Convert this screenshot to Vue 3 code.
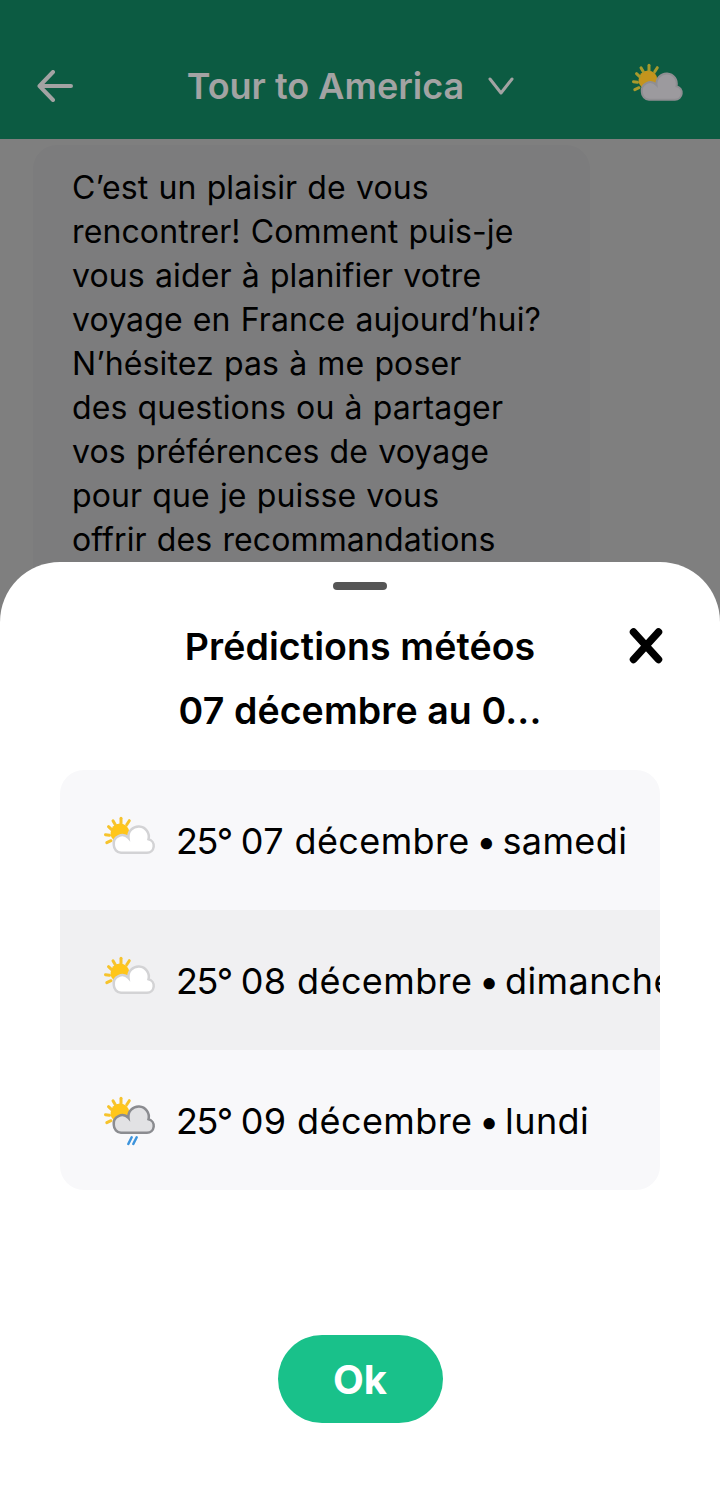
<script setup>
const rows = [
  { id: 1, temp: '25°', date: '07 décembre', day: 'samedi', rain: false },
  { id: 2, temp: '25°', date: '08 décembre', day: 'dimanche', rain: false },
  { id: 3, temp: '25°', date: '09 décembre', day: 'lundi', rain: true }
]
const lines = [
  'C’est un plaisir de vous',
  'rencontrer! Comment puis-je',
  'vous aider à planifier votre',
  'voyage en France aujourd’hui?',
  'N’hésitez pas à me poser',
  'des questions ou à partager',
  'vos préférences de voyage',
  'pour que je puisse vous',
  'offrir des recommandations',
  'personnalisées.'
]
const rays = [
  'M1.500 18.700L5.500 19.300', 'M4.500 10.700L7.700 13.700', 'M9 4.700L11.300 8.700', 'M17 2.300V7.300', 'M25.300 4.700L22.700 8.700', 'M2.800 26.700L7 24.700'
]
const cloud = 'M17 36.800H43A6.900 6.900 0 0 0 44.500 23.200A10.200 10.200 0 1 0 24.500 22A8.500 8.500 0 0 0 9.800 29A7.800 7.800 0 0 0 17 36.800Z'
</script>

<template>
  <div class="page">
    <header class="bar">
      <svg class="back" width="36" height="32" viewBox="0 0 36 32" fill="none">
        <path d="M34 16H3M16 2L2.500 16L16 30" stroke="#a3a3a3" stroke-width="4" stroke-linecap="round" stroke-linejoin="round" />
      </svg>
      <div class="bar-title">
        <span>Tour to America</span>
        <svg width="26" height="20" viewBox="0 0 26 20" fill="none">
          <path d="M2 3L13 17L24 3" stroke="#a3a3a3" stroke-width="3" stroke-linecap="round" stroke-linejoin="round" />
        </svg>
      </div>
      <svg class="bar-icon" width="52" height="40" viewBox="0 0 52 40" fill="none">
        <circle cx="16" cy="17" r="9.500" fill="#c4941c" />
        <path v-for="r in rays" :key="r" :d="r" stroke="#a89a2c" stroke-width="3" stroke-linecap="round" />
        <path :d="cloud" fill="#9c9a9e" stroke="#8f8e92" stroke-width="2" />
      </svg>
    </header>

    <main class="chat">
      <div class="bubble">
        <p v-for="l in lines" :key="l">{{ l }}</p>
      </div>
    </main>

    <div class="scrim"></div>

    <section class="sheet">
      <div class="handle"></div>
      <div class="head">
        <h2>Prédictions météos</h2>
        <h2>07 décembre au 0...</h2>
        <svg class="close" width="36" height="38" viewBox="0 0 36 38" fill="none">
          <path d="M5.500 5L30.500 32.500M30.500 5L5.500 32.500" stroke="#000" stroke-width="7.500" stroke-linecap="round" />
        </svg>
      </div>
      <div class="list">
        <div v-for="row in rows" :key="row.id" class="row">
          <svg class="icon" width="52" height="50" viewBox="0 0 52 50" fill="none">
            <circle cx="16" cy="17" r="9.500" fill="#ffc61a" />
            <path v-for="r in rays" :key="r" :d="r" stroke="#f6c32c" stroke-width="3" stroke-linecap="round" />
            <path :d="cloud" :fill="row.rain ? '#e2e2e4' : '#fff'" :stroke="row.rain ? '#8b8c90' : '#d3d3d5'" stroke-width="2.500" />
            <path v-if="row.rain" d="M24.300 48L27.700 41.300M29.300 48L32.700 41.300" stroke="#3d94dc" stroke-width="2.500" stroke-linecap="round" />
          </svg>
          <span class="row-text"><span class="temp">{{ row.temp }}</span><span>{{ row.date }}</span><span class="dot">•</span><span>{{ row.day }}</span></span>
        </div>
      </div>
      <button class="ok">Ok</button>
    </section>
  </div>
</template>

<style>
html, body { margin: 0; background: #fff; }
</style>

<style scoped>
.page {
  position: relative;
  width: 720px;
  height: 1485px;
  overflow: hidden;
  background: #fff;
  font-family: Inter, "Liberation Sans", sans-serif;
  color: #000;
}
.bar {
  height: 139px;
  background: #0c5b42;
  box-sizing: border-box;
  padding: 60px 36px 0 37px;
  display: flex;
  align-items: flex-start;
  justify-content: space-between;
  color: #a3a3a3;
}
.back { margin-top: 10px; }
.bar-title {
  display: flex;
  align-items: center;
  gap: 24px;
  margin-right: 4px;
  font-size: 36px;
  font-weight: 600;
  line-height: 52px;
}
.bar-icon { margin-top: 3px; }
.chat { padding: 6px 0 0 33px; }
.bubble {
  width: 557px;
  box-sizing: border-box;
  background: #f8f8fa;
  border-radius: 24px;
  padding: 21px 20px 20px 39px;
  font-size: 32px;
  line-height: 44px;
  word-spacing: 1px;
  letter-spacing: 0.120px;
}
.bubble p { margin: 0; white-space: nowrap; }
.scrim {
  position: absolute;
  inset: 139px 0 0 0;
  background: rgba(0, 0, 0, 0.5);
}
.sheet {
  position: absolute;
  left: 0;
  right: 0;
  top: 562px;
  bottom: 0;
  background: #fff;
  border-radius: 60px 60px 0 0;
  display: flex;
  flex-direction: column;
  align-items: center;
}
.handle {
  width: 54px;
  height: 8px;
  margin-top: 20px;
  border-radius: 4px;
  background: #555;
}
.head {
  position: relative;
  align-self: stretch;
  margin-top: 25px;
  text-align: center;
}
.head h2 {
  margin: 0;
  font-size: 37.500px;
  font-weight: 600;
  line-height: 64px;
  letter-spacing: 0.100px;
}
.close {
  position: absolute;
  right: 56px;
  top: 12px;
}
.list {
  width: 600px;
  margin-top: 27px;
  border-radius: 24px;
  overflow: hidden;
  background: #f8f8fa;
}
.row {
  height: 140px;
  box-sizing: border-box;
  padding: 0 0 0 44px;
  display: flex;
  align-items: center;
  gap: 20px;
  white-space: nowrap;
  font-size: 36px;
  letter-spacing: 0.400px;
}
.row:nth-child(2) { background: #f0f0f2; }
.icon { flex: none; margin-top: 2px; }
.row-text { flex: none; padding-top: 2px; }
.temp { letter-spacing: -1.500px; margin-right: 9px; }
.dot { margin: 0 5.500px 0 6.500px; }
.ok {
  width: 165px;
  height: 88px;
  margin-top: 145px;
  border: 0;
  border-radius: 44px;
  background: #19c18a;
  color: #fff;
  font-family: inherit;
  font-size: 40px;
  font-weight: 700;
  padding: 0;
}
</style>
